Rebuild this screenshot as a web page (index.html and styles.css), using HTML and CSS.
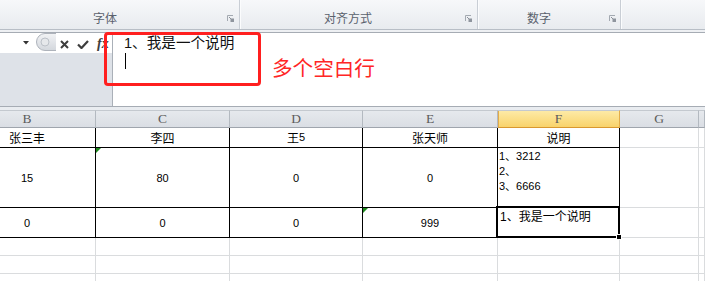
FILE: index.html
```html
<!DOCTYPE html>
<html lang="zh">
<head>
<meta charset="utf-8">
<link rel="stylesheet" href="styles.css">
</head>
<body>
<div class="app">
  <div class="ribbon">
    <div class="group g1"><span class="glabel">字体</span><svg class="launcher" width="7" height="7" viewBox="0 0 7 7"><path d="M0.5 6V0.5H6" fill="none" stroke="#a3a9b1"/><path d="M2 2L5 5" stroke="#8a9099"/><rect x="3.5" y="3.5" width="3.5" height="3.5" fill="#8f959e"/></svg></div>
    <div class="group g2"><span class="glabel">对齐方式</span><svg class="launcher" width="7" height="7" viewBox="0 0 7 7"><path d="M0.5 6V0.5H6" fill="none" stroke="#a3a9b1"/><path d="M2 2L5 5" stroke="#8a9099"/><rect x="3.5" y="3.5" width="3.5" height="3.5" fill="#8f959e"/></svg></div>
    <div class="group g3"><span class="glabel">数字</span><svg class="launcher" width="7" height="7" viewBox="0 0 7 7"><path d="M0.5 6V0.5H6" fill="none" stroke="#a3a9b1"/><path d="M2 2L5 5" stroke="#8a9099"/><rect x="3.5" y="3.5" width="3.5" height="3.5" fill="#8f959e"/></svg></div>
    <div class="group g4"></div>
  </div>
  <div class="ribbon-gap"></div>
  <div class="fbar">
    <div class="fbar-left">
      <div class="namerow">
        <div class="namebox"><svg class="dd" width="6" height="4" viewBox="0 0 6 4"><path d="M0 0H6L3 3.5Z" fill="#333"/></svg></div>
        <svg class="pill" width="20" height="18" viewBox="0 0 20 18">
          <defs><linearGradient id="pg" x1="0" y1="0" x2="0" y2="1"><stop offset="0" stop-color="#f2f3f5"/><stop offset="1" stop-color="#d3d7dd"/></linearGradient></defs>
          <path d="M20 0.5H9A8.5 8.5 0 0 0 9 17.5H20" fill="url(#pg)" stroke="#aeb3bb"/>
          <circle cx="9" cy="9" r="4" fill="#e6e8eb" stroke="#bcc1c8"/>
        </svg>
        <svg class="ico-x" width="9" height="9" viewBox="0 0 9 9"><path d="M1 1L8 8M8 1L1 8" stroke="#3d3d3d" stroke-width="2"/></svg>
        <svg class="ico-ok" width="12" height="9" viewBox="0 0 12 9"><path d="M1 4.5L4.5 8L11 1" fill="none" stroke="#3d3d3d" stroke-width="2.2"/></svg>
        <span class="fx">fx</span>
      </div>
      <div class="fbar-fill"></div>
    </div>
    <div class="fbar-input">
      <div class="ftext">1、我是一个说明</div>
      <div class="caret"></div>
    </div>
    <div class="annot-box"></div>
    <div class="annot-text">多个空白行</div>
  </div>
  <div class="band"></div>
  <div class="sheet">
    <div class="h">B</div>
    <div class="h">C</div>
    <div class="h">D</div>
    <div class="h">E</div>
    <div class="h hsel">F</div>
    <div class="h">G</div>
    <div class="h"></div>

    <div class="c k">张三丰</div>
    <div class="c k">李四</div>
    <div class="c k">王<span class="num">5</span></div>
    <div class="c k">张天师</div>
    <div class="c k">说明</div>
    <div class="c"></div>
    <div class="c"></div>

    <div class="c k num">15</div>
    <div class="c k num tri">80</div>
    <div class="c k num">0</div>
    <div class="c k num">0</div>
    <div class="c k multi"><span>1、3212</span><span>2、</span><span>3、6666</span></div>
    <div class="c"></div>
    <div class="c"></div>

    <div class="c k num">0</div>
    <div class="c k num">0</div>
    <div class="c k num">0</div>
    <div class="c k num tri">999</div>
    <div class="c k wrap selcell"><span><span class="n1">1</span>、我是一个说明</span><span class="handle"></span></div>
    <div class="c"></div>
    <div class="c"></div>

    <div class="c"></div><div class="c"></div><div class="c"></div><div class="c"></div><div class="c"></div><div class="c"></div><div class="c"></div>
    <div class="c"></div><div class="c"></div><div class="c"></div><div class="c"></div><div class="c"></div><div class="c"></div><div class="c"></div>
    <div class="c"></div><div class="c"></div><div class="c"></div><div class="c"></div><div class="c"></div><div class="c"></div><div class="c"></div>
  </div>
</div>
</body>
</html>
```
FILE: styles.css
```css
* { box-sizing: border-box; }
html, body { margin: 0; padding: 0; }
body {
  width: 705px;
  height: 281px;
  overflow: hidden;
  background: #fff;
  font-family: "Liberation Sans", "Noto Sans CJK SC", sans-serif;
  color: #000;
}
.app { width: 705px; }

/* ribbon */
.ribbon {
  height: 30px;
  display: flex;
  background: linear-gradient(#f7f8fa, #e8ebef);
  border-bottom: 1px solid #b8bec6;
}
.group {
  display: flex;
  align-items: center;
  height: 29px;
  padding-top: 7px;
  border-right: 1px solid #c9ced5;
  box-shadow: 1px 0 0 #fbfcfd;
}
.g1 { width: 240px; }
.g2 { width: 237px; margin-left: 1px; }
.g3 { width: 142px; margin-left: 1px; }
.g4 { flex: 1; border-right: none; box-shadow: none; }
.glabel {
  font-family: "Noto Sans CJK SC", sans-serif;
  font-size: 12px;
  line-height: 14px;
  color: #5a616d;
}
.g1 .glabel { margin-left: 93px; }
.g2 .glabel { margin-left: 83px; }
.g3 .glabel { margin-left: 48px; }
.launcher { margin-left: auto; margin-right: 5px; margin-top: 1px; }
.g3 .launcher { margin-right: 4px; }

.ribbon-gap { height: 2px; background: #eef0f3; }

/* formula bar */
.fbar {
  position: relative;
  height: 75px;
  display: flex;
  border-top: 1px solid #a6acb4;
  border-bottom: 1px solid #a6acb4;
  background: #fff;
}
.fbar-left {
  width: 113px;
  display: flex;
  flex-direction: column;
  border-right: 1px solid #aab0b8;
}
.namerow {
  height: 20px;
  display: flex;
  align-items: center;
  background: #fff;
}
.namebox {
  width: 36px;
  height: 20px;
  display: flex;
  align-items: center;
  padding-left: 23px;
}
.pill { margin-top: -2px; }
.ico-x { margin-left: 4px; margin-top: 3px; }
.ico-ok { margin-left: 8px; margin-top: 3px; }
.fx {
  margin-left: 8px;
  margin-top: 2px;
  font-family: "Liberation Serif", serif;
  font-style: italic;
  font-weight: bold;
  font-size: 14px;
  color: #3d3d3d;
}
.fbar-fill { flex: 1; background: #dee2e8; }
.fbar-input {
  flex: 1;
  padding: 1px 0 0 11px;
}
.ftext {
  font-family: "Liberation Sans", "Noto Sans CJK SC", sans-serif;
  font-size: 14.6px;
  line-height: 19px;
  color: #111;
}
.caret {
  width: 1px;
  height: 16px;
  margin-left: 1px;
  background: #000;
}
.annot-box {
  position: absolute;
  left: 104px;
  top: -1px;
  width: 157px;
  height: 54px;
  border: 3px solid #ff1f1f;
  border-radius: 4px;
}
.annot-text {
  position: absolute;
  left: 272px;
  top: 21px;
  font-family: "Noto Sans CJK SC", sans-serif;
  font-size: 20.6px;
  line-height: 26px;
  color: #ff2626;
}

.band { height: 3px; background: #e9ecf0; }

/* sheet */
.sheet {
  margin-left: -41px;
  width: 746px;
  display: grid;
  grid-template-columns: 137px 134px 133px 135px 122px 79px 1fr;
  grid-template-rows: 18px 20px 60px 30px 18px 18px 18px;
}
.h {
  display: flex;
  align-items: center;
  justify-content: center;
  background: linear-gradient(#e6e9ed, #dadee4);
  border-top: 1px solid #c4c9cf;
  border-right: 1px solid #b3b9c0;
  border-bottom: 1px solid #9fa5ad;
  font-family: "Liberation Serif", "DejaVu Serif", serif;
  font-size: 13.5px;
  color: #5c5c5c;
}
.hsel {
  background: linear-gradient(#fdeaa6, #f9d36b);
  border-right-color: #e2ac4a;
  border-bottom-color: #d9982f;
  box-shadow: inset 1px 0 0 #e2ac4a;
}
.c {
  position: relative;
  display: flex;
  align-items: center;
  justify-content: center;
  border-right: 1px solid #dadcde;
  border-bottom: 1px solid #dadcde;
  font-family: "Noto Sans CJK SC", sans-serif;
  font-size: 12px;
  line-height: 15px;
  color: #000;
}
.c.k { border-right-color: #000; border-bottom-color: #000; }
.num {
  font-family: "Liberation Sans", sans-serif;
  font-size: 11px;
}
.c.num { padding-top: 1px; }
.multi {
  flex-direction: column;
  align-items: flex-start;
  justify-content: flex-start;
  padding: 1px 0 0 1px;
  font-family: "Liberation Sans", "Noto Sans CJK SC", sans-serif;
  font-size: 11px;
  line-height: 15px;
}
.wrap {
  align-items: flex-start;
  justify-content: flex-start;
  padding: 0 0 0 2px;
  font-size: 12px;
}
.n1 { font-family: "Liberation Sans", sans-serif; font-size: 12px; }
.tri::before {
  content: "";
  position: absolute;
  left: 0;
  top: 0;
  border-top: 5px solid #1e8a1e;
  border-right: 5px solid transparent;
}
.selcell::after {
  content: "";
  position: absolute;
  left: -2px;
  top: -2px;
  right: -1px;
  bottom: -1px;
  border: 2px solid #000;
  z-index: 2;
}
.handle {
  position: absolute;
  right: -3px;
  bottom: -3px;
  width: 6px;
  height: 6px;
  background: #000;
  border: 1px solid #fff;
  z-index: 3;
}
```
